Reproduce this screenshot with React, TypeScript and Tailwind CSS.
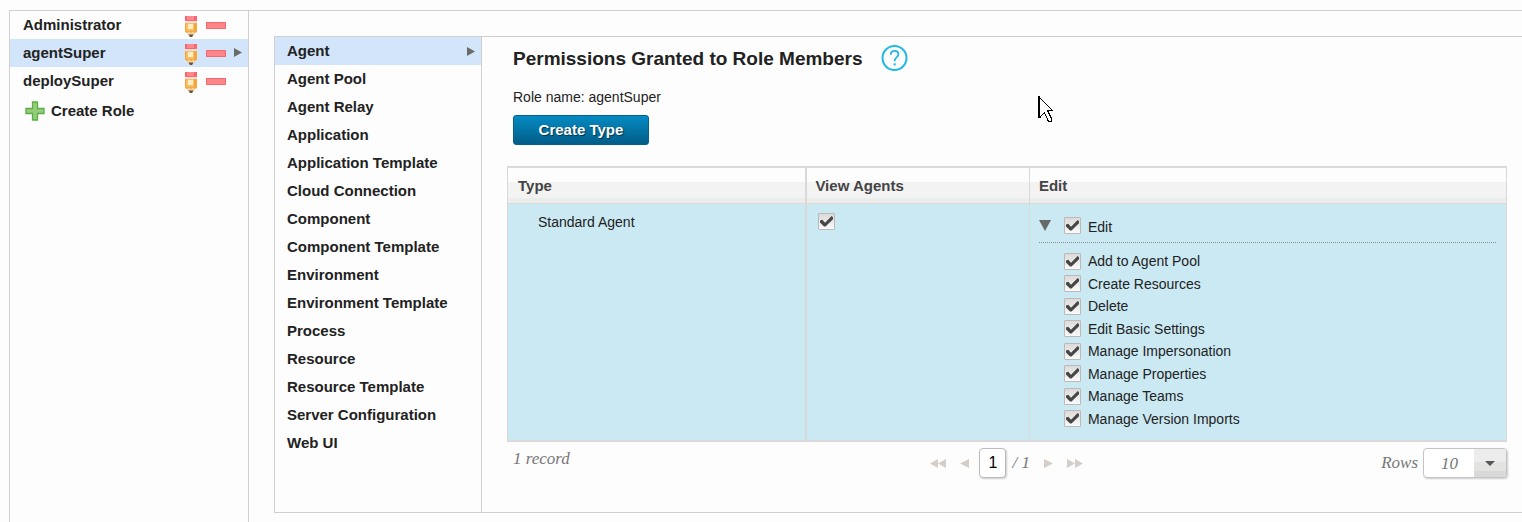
import React, { useState } from "react";
import type { ReactNode } from "react";

const roles = ["Administrator", "agentSuper", "deploySuper"];

const resourceTypes = [
  "Agent",
  "Agent Pool",
  "Agent Relay",
  "Application",
  "Application Template",
  "Cloud Connection",
  "Component",
  "Component Template",
  "Environment",
  "Environment Template",
  "Process",
  "Resource",
  "Resource Template",
  "Server Configuration",
  "Web UI",
];

const editPermissions = [
  "Add to Agent Pool",
  "Create Resources",
  "Delete",
  "Edit Basic Settings",
  "Manage Impersonation",
  "Manage Properties",
  "Manage Teams",
  "Manage Version Imports",
];

function PencilIcon() {
  return (
    <svg width="12" height="21" viewBox="0 0 12 21" aria-hidden="true">
      <path d="M0 15h12L7 21H5z" fill="#f6d3a2" />
      <path d="M0 7h12v8.500l-2 1.500-2-1.500-2 1.500-2-1.500L2 17 0 15.500z" fill="#f3a73f" />
      <path d="M1 7h8v8H1z" fill="#f9bd62" />
      <path d="M3 8h5v5H3z" fill="#ffeec4" />
      <path d="M0 0h12v5H0z" fill="#fb666e" />
      <path d="M2 0h7v4H2z" fill="#ff878d" />
      <path d="M0 5h12v2H0z" fill="#f9e0dc" />
      <path d="M3.500 18.500h5L7 21H5z" fill="#6a5238" />
    </svg>
  );
}

function MinusIcon() {
  return (
    <svg width="20" height="8" viewBox="0 0 20 8" aria-hidden="true">
      <rect x="0.5" y="0.5" width="19" height="6" fill="#ff8589" stroke="#f7696f" />
    </svg>
  );
}

function PlusIcon() {
  return (
    <svg width="20" height="20" viewBox="0 0 20 20" aria-hidden="true">
      <path
        d="M7.500 1h5v6.500h6.500v5h-6.500V19h-5v-6.500H1v-5h6.500z"
        fill="#93cd7a"
        stroke="#5cad45"
        strokeWidth="1.300"
      />
    </svg>
  );
}

function ArrowRight() {
  return (
    <svg width="9" height="9" viewBox="0 0 9 9" aria-hidden="true">
      <path d="M1 0l8 4.500L1 9z" fill="#6b6b68" />
    </svg>
  );
}

function CheckBox({ id, label }: { id: string; label?: string }) {
  const [checked, setChecked] = useState(true);
  return (
    <span className="inline-grid size-[17px] shrink-0">
      <input
        id={id}
        type="checkbox"
        aria-label={label}
        checked={checked}
        onChange={(e) => setChecked(e.target.checked)}
        className="col-start-1 row-start-1 size-[17px] appearance-none rounded-[1px] border border-[#bdb9b8] bg-linear-to-b from-[#dcdad9] to-[#fafafa]"
      />
      {checked && (
        <svg
          className="pointer-events-none col-start-1 row-start-1"
          width="17"
          height="17"
          viewBox="0 0 17 17"
          aria-hidden="true"
        >
          <path d="M2 7.500l2.300-.8 2.700 3 6.700-6.700 1.300 1.200v2L7.500 13.500H6L2 9.500z" fill="#454645" />
        </svg>
      )}
    </span>
  );
}

function PageButton({ label, children }: { label: string; children: ReactNode }) {
  return (
    <button type="button" aria-label={label} className="text-[#d3cec9]">
      {children}
    </button>
  );
}

const headerCell =
  "h-9 border-b border-[#d9d9d9] bg-[linear-gradient(to_bottom,#fdfdfd_14px,#f3f3f3_14px,#f3f3f3_30px,#ebedea_30px)] text-left text-[15px] font-bold text-[#444]";

export default function App() {
  const [role, setRole] = useState("agentSuper");
  const [type, setType] = useState("Agent");

  return (
    <div className="min-h-screen bg-[#fdfdfd] pt-2.5 pl-[9px] font-['Liberation_Sans',Arial,sans-serif] text-sm text-[#222]">
      <div className="flex min-h-[calc(100vh-10px)] border-t border-[#d0d0d0]">
        <nav aria-label="Roles" className="w-60 shrink-0 border-x border-[#d0d0d0]">
          <ul>
            {roles.map((name) => (
              <li
                key={name}
                className={`flex h-7 items-center pl-[13px] ${name === role ? "bg-[#d3e5fb]" : ""}`}
              >
                <button
                  type="button"
                  onClick={() => setRole(name)}
                  className="flex-1 text-left text-[15px] font-bold"
                >
                  {name}
                </button>
                <button type="button" aria-label={`Edit ${name}`} className="pt-0.5">
                  <PencilIcon />
                </button>
                <button type="button" aria-label={`Delete ${name}`} className="ml-[9px] pt-0.5">
                  <MinusIcon />
                </button>
                <span className="flex w-[22px] justify-center pb-0.5">{name === role && <ArrowRight />}</span>
              </li>
            ))}
          </ul>
          <button type="button" className="flex h-8 items-center gap-1.5 pl-[15px] text-[15px] font-bold">
            <PlusIcon />
            Create Role
          </button>
        </nav>

        <div className="mt-[25px] mb-[9px] ml-[25px] flex flex-1 self-start border-y border-l border-[#d0d0d0]">
          <nav aria-label="Resource types" className="w-[207px] shrink-0 border-r border-[#d0d0d0]">
            <ul>
              {resourceTypes.map((name) => (
                <li key={name}>
                  <button
                    type="button"
                    onClick={() => setType(name)}
                    className={`flex h-7 w-full items-center justify-between pr-1.5 pl-3 text-[15px] font-bold ${
                      name === type ? "bg-[#d3e5fb]" : ""
                    }`}
                  >
                    {name}
                    {name === type && <ArrowRight />}
                  </button>
                </li>
              ))}
            </ul>
          </nav>

          <main className="relative flex-1 pr-[15px] pb-[34px] pl-[25px]">
            <div className="px-1.5 pt-2">
              <div className="flex items-center gap-[18px]">
                <h1 className="text-[19px] leading-[27px] font-bold">Permissions Granted to Role Members</h1>
                <button type="button" aria-label="Help">
                  <svg width="27" height="27" viewBox="0 0 27 27" fill="none" stroke="#1fb9e6" aria-hidden="true">
                    <circle cx="13.500" cy="13" r="12" strokeWidth="2" />
                    <path
                      d="M9.800 9.700c0-2.500 1.600-3.900 3.800-3.900s3.800 1.400 3.800 3.500c0 3-3.700 3.200-3.700 6.200v.8"
                      strokeWidth="1.800"
                    />
                    <path d="M13.700 18.300v2.200" strokeWidth="2" />
                  </svg>
                </button>
              </div>
              <p className="mt-[15px] leading-5">Role name: agentSuper</p>
              <button
                type="button"
                className="mt-2 block h-[30px] w-[136px] rounded-[3px] border border-[#04618d] bg-linear-to-b from-[#058bc2] to-[#025d89] text-[15px] font-bold text-white text-shadow-[1px_1px_1px_#00334f]"
              >
                Create Type
              </button>
            </div>

            <table className="mt-[21px] w-full table-fixed border-separate border-spacing-0 border-x border-y-2 border-[#d9d9d9]">
              <colgroup>
                <col className="w-[30%]" />
                <col className="w-[22.300%]" />
                <col />
              </colgroup>
              <thead>
                <tr>
                  <th scope="col" className={`${headerCell} border-r-2 pl-2.5`}>Type</th>
                  <th scope="col" className={`${headerCell} border-r pl-2`}>View Agents</th>
                  <th scope="col" className={`${headerCell} pl-[9px]`}>Edit</th>
                </tr>
              </thead>
              <tbody>
                <tr className="bg-[#cbe9f3] align-top">
                  <td className="border-r-2 border-[#d9d9d9] pt-2 pl-[30px] leading-5">Standard Agent</td>
                  <td className="border-r border-[#d9d9d9] pt-[9px] pl-[11px]">
                    <CheckBox id="view-agents" label="View Agents" />
                  </td>
                  <td className="pr-2.5 pb-2.5 pl-[9px]">
                    <div className="flex h-[39px] items-center border-b border-dotted border-[#8a8f90] pt-1">
                      <button type="button" aria-label="Collapse Edit" className="w-[25px]">
                        <svg width="12" height="11" viewBox="0 0 12 11" aria-hidden="true">
                          <path d="M0 0h12L6 11z" fill="#686a69" />
                        </svg>
                      </button>
                      <CheckBox id="edit-all" />
                      <label htmlFor="edit-all" className="pt-1 pl-[7px]">Edit</label>
                    </div>
                    <ul className="mt-[7px] grid h-[180px] grid-rows-8 pl-[25px]">
                      {editPermissions.map((name, i) => (
                        <li key={name} className="flex items-center gap-[7px]">
                          <CheckBox id={`perm-${i}`} />
                          <label htmlFor={`perm-${i}`}>{name}</label>
                        </li>
                      ))}
                    </ul>
                  </td>
                </tr>
              </tbody>
            </table>

            <div className="mt-1.5 grid grid-cols-3 items-center font-['Liberation_Serif',serif] text-[17px] text-[#777] italic">
              <span className="-mt-2 pl-1.5">1 record</span>
              <div className="flex items-center justify-center">
                <PageButton label="First page">
                  <svg width="16" height="9" viewBox="0 0 16 9" fill="currentColor" aria-hidden="true">
                    <path d="M8 0v9L0 4.500zM16 0v9L8 4.500z" />
                  </svg>
                </PageButton>
                <span className="w-3.5" />
                <PageButton label="Previous page">
                  <svg width="9" height="9" viewBox="0 0 9 9" fill="currentColor" aria-hidden="true">
                    <path d="M9 0v9L0 4.500z" />
                  </svg>
                </PageButton>
                <input
                  type="text"
                  aria-label="Page"
                  defaultValue="1"
                  className="mr-1.5 ml-2.5 h-[30px] w-[27px] rounded-[4px] border border-[#bbb] bg-white text-center font-['Liberation_Sans',sans-serif] text-base text-black not-italic shadow-[1px_1px_2px_#ccc]"
                />
                <span className="w-[22px]">/ 1</span>
                <span className="w-2.5" />
                <PageButton label="Next page">
                  <svg width="9" height="9" viewBox="0 0 9 9" fill="currentColor" aria-hidden="true">
                    <path d="M0 0v9l9-4.500z" />
                  </svg>
                </PageButton>
                <span className="w-3.5" />
                <PageButton label="Last page">
                  <svg width="16" height="9" viewBox="0 0 16 9" fill="currentColor" aria-hidden="true">
                    <path d="M0 0v9l8-4.500zM8 0v9l8-4.500z" />
                  </svg>
                </PageButton>
              </div>
              <div className="flex items-center justify-end gap-[5px]">
                <label htmlFor="rows">Rows</label>
                <div className="grid h-[30px] w-[84px] grid-cols-[1fr_32px] overflow-hidden rounded-[4px] border border-[#c4c4c4] bg-white shadow-[1px_1px_2px_#ccc]">
                  <select
                    id="rows"
                    defaultValue="10"
                    className="col-span-2 col-start-1 row-start-1 appearance-none bg-transparent pt-0.5 pl-[17px] italic"
                  >
                    <option>10</option>
                    <option>25</option>
                    <option>50</option>
                  </select>
                  <span className="pointer-events-none col-start-2 row-start-1 grid place-items-center bg-[linear-gradient(to_bottom,#ececec_13px,#e3e3e1_13px,#e3e3e1_22px,#d9d9d9_22px)]">
                    <svg width="10" height="5" viewBox="0 0 10 5" aria-hidden="true">
                      <path d="M0 0h10L5 5z" fill="#555" />
                    </svg>
                  </span>
                </div>
              </div>
            </div>

            <svg
              className="pointer-events-none absolute top-[59px] left-[556px]"
              width="16"
              height="27"
              viewBox="0 0 16 27"
              shapeRendering="crispEdges"
              aria-hidden="true"
            >
              <path d="M1 1l13 13H9l4 9-1 3h-2L6 17l-5 5z" fill="#fff" />
              <path d="M0 0h2v20h1v2H0z" />
              <path
                d="M1.500 1.500l13 13h-5l4 8v3h-3l-4-8.500-3.500 3"
                fill="none"
                stroke="#000"
              />
            </svg>
          </main>
        </div>
      </div>
    </div>
  );
}
